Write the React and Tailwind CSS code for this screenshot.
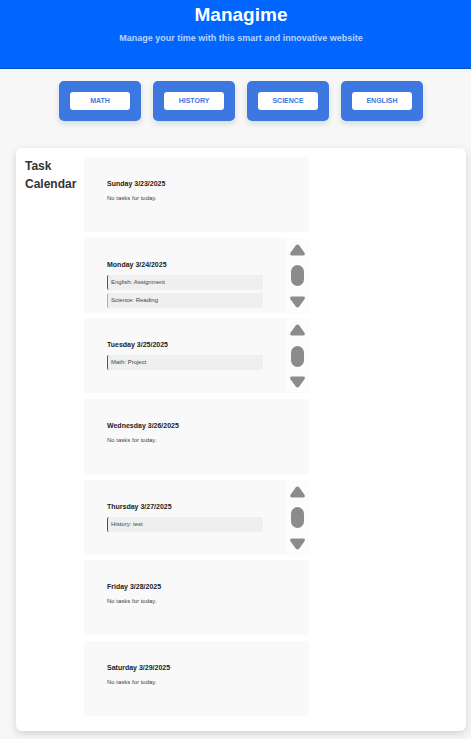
const subjects = ['MATH', 'HISTORY', 'SCIENCE', 'ENGLISH'];

const days = [
  { name: 'Sunday', date: '3/23/2025', tasks: [] },
  {
    name: 'Monday',
    date: '3/24/2025',
    tasks: [
      { label: 'English: Assignment', border: 'border-[#e01b24]' },
      { label: 'Science: Reading', border: 'border-[#ffa500]' },
    ],
  },
  {
    name: 'Tuesday',
    date: '3/25/2025',
    tasks: [{ label: 'Math: Project', border: 'border-[#e01b24]' }],
  },
  { name: 'Wednesday', date: '3/26/2025', tasks: [] },
  {
    name: 'Thursday',
    date: '3/27/2025',
    tasks: [{ label: 'History: test', border: 'border-[#008000]' }],
  },
  { name: 'Friday', date: '3/28/2025', tasks: [] },
  { name: 'Saturday', date: '3/29/2025', tasks: [] },
];

function Arrow({ down }) {
  return (
    <svg
      viewBox="0 0 15 12"
      className={`block h-3 w-[15px] ${down ? 'rotate-180' : ''}`}
      fill="#8b8b8b"
      aria-hidden="true"
    >
      <path d="M5.7 1.4Q7.5 -0.6 9.3 1.4L14.5 8.8Q15.6 11.4 13.4 11.4H1.6Q-0.6 11.4 0.5 8.8Z" />
    </svg>
  );
}

// Scroll rail shown on days that have tasks
function ScrollRail() {
  return (
    <div className="flex w-[23px] shrink-0 flex-col items-center justify-between bg-[#fcfcfc] pt-1.5 pb-[5px]">
      <button type="button" aria-label="Scroll up">
        <Arrow />
      </button>
      <div className="h-[21px] w-[13px] rounded-full bg-[#8b8b8b]" />
      <button type="button" aria-label="Scroll down">
        <Arrow down />
      </button>
    </div>
  );
}

function DayCard({ day }) {
  const hasTasks = day.tasks.length > 0;

  return (
    <section className="flex min-h-[75px] overflow-hidden rounded-xs bg-[#f9f9f9]">
      <div className="min-w-0 flex-1 px-[23px] pt-[22px] pb-[5px]">
        <h3 className="mb-1.5 text-[7px] leading-[9px] font-bold whitespace-nowrap text-[#222222]">
          {day.name} {day.date}
        </h3>
        {hasTasks ? (
          <ul className="space-y-[3px]">
            {day.tasks.map((task) => (
              <li
                key={task.label}
                className={`rounded-xs border-l bg-[#efefef] py-[3px] pl-[3px] text-[6px] leading-[9px] text-[#444444] ${task.border}`}
              >
                {task.label}
              </li>
            ))}
          </ul>
        ) : (
          <p className="text-[6px] leading-[9px] text-[#444444]">No tasks for today.</p>
        )}
      </div>
      {hasTasks && <ScrollRail />}
    </section>
  );
}

export default function App() {
  return (
    <div className="flex min-h-screen flex-col bg-[#f7f7f7] font-['Liberation_Sans',Arial,sans-serif] text-[#333333]">
      <header className="border-b border-[#0052cc] bg-[#0066ff] pt-1 pb-6 pl-[11px] text-center">
        <h1 className="text-[19px] leading-[22px] font-bold text-white">Managime</h1>
        <p className="mt-1.5 text-[9px] leading-3 font-bold text-[#b8d4ff]">
          Manage your time with this smart and innovative website
        </p>
      </header>

      <nav className="flex justify-center gap-3 pt-3 pl-[11px]">
        {subjects.map((subject) => (
          <div
            key={subject}
            className="rounded-[5px] bg-[#3d78e0] p-[11px] shadow-[0_3px_6px_rgba(0,0,0,0.12)]"
          >
            <button
              type="button"
              className="block h-[18px] w-[60px] rounded-[3px] bg-white text-[7px] leading-[18px] font-bold text-[#3d78e0]"
            >
              {subject}
            </button>
          </div>
        ))}
      </nav>

      <main className="mt-[27px] mr-[5px] mb-2 ml-4 flex flex-1 gap-[7px] rounded-md bg-white pt-[9px] pb-[15px] pl-[9px] shadow-[0_3px_8px_rgba(0,0,0,0.15)]">
        <h2 className="w-[52px] shrink-0 text-[12px] leading-[18px] font-bold">Task Calendar</h2>
        <div className="flex w-[51%] flex-col justify-between gap-[5px]">
          {days.map((day) => (
            <DayCard key={day.name} day={day} />
          ))}
        </div>
      </main>
    </div>
  );
}
